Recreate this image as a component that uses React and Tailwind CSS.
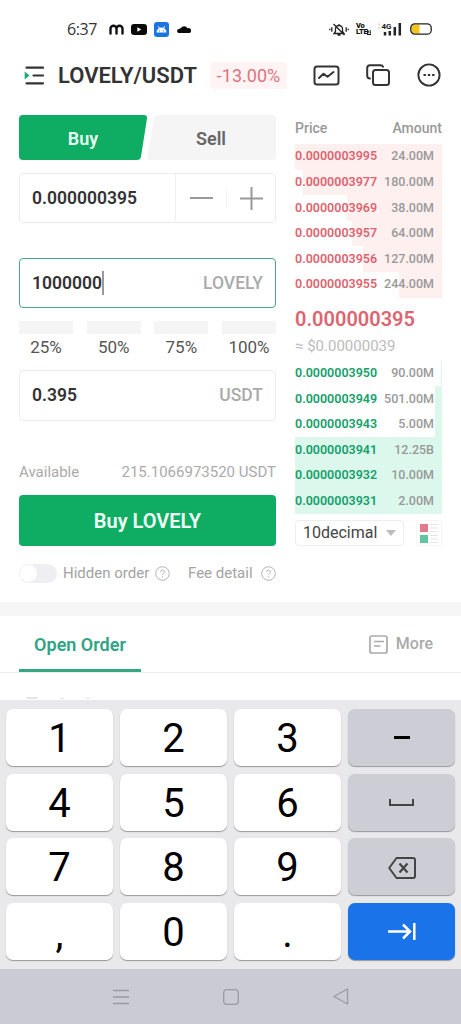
import { useState } from "react";

const asks = [
    { price: "0.0000003995", amount: "24.00M", depth: 147 },
    { price: "0.0000003977", amount: "180.00M", depth: 139 },
    { price: "0.0000003969", amount: "38.00M", depth: 95 },
    { price: "0.0000003957", amount: "64.00M", depth: 90 },
    { price: "0.0000003956", amount: "127.00M", depth: 79 },
    { price: "0.0000003955", amount: "244.00M", depth: 43 },
];

const bids = [
    { price: "0.0000003950", amount: "90.00M", depth: 1 },
    { price: "0.0000003949", amount: "501.00M", depth: 7 },
    { price: "0.0000003943", amount: "5.00M", depth: 7 },
    { price: "0.0000003941", amount: "12.25B", depth: 147 },
    { price: "0.0000003932", amount: "10.00M", depth: 147 },
    { price: "0.0000003931", amount: "2.00M", depth: 147 },
];

const StatusBar = () => (
    <div className="flex h-14 items-center justify-between pt-0.5 pr-[29px] pl-[67px]">
        <div className="flex items-center">
            <span className="w-[42px] font-['Open_Sans'] text-[16px] tracking-[-0.4px] text-[#333]">6:37</span>
            <svg className="h-[11px] w-[15px]" viewBox="0 0 15 11" fill="none" stroke="#111" strokeWidth="2.4" strokeLinecap="round">
                <path d="M1.5 9.5V4.7a3 3 0 0 1 6 0v4.8M7.5 4.7a3 3 0 0 1 6 0v4.8" />
            </svg>
            <svg className="ml-[7px] h-[11px] w-4" viewBox="0 0 16 11">
                <rect width="16" height="11" rx="3" fill="#0a0a0a" />
                <path d="M6.3 3.2v4.6l4-2.3z" fill="#fff" />
            </svg>
            <svg className="ml-[7px] size-[15px]" viewBox="0 0 15 15">
                <rect width="15" height="15" rx="3" fill="#1b75e0" />
                <path d="M2.5 10.5a5 5 0 0 1 10 0z" fill="#fff" />
                <path d="M4.2 4.2l1.3 2M10.8 4.2l-1.3 2" stroke="#fff" />
                <circle cx="5.5" cy="8.8" r=".6" fill="#1b75e0" />
                <circle cx="9.5" cy="8.8" r=".6" fill="#1b75e0" />
            </svg>
            <svg className="ml-2 h-2 w-[14px]" viewBox="0 0 14 8">
                <path d="M2 8a2 2 0 0 1 0-4 2 2 0 0 1 1.7-.8A4 4 0 0 1 10.600 3.200 2.500 2.500 0 0 1 12.500 8z" fill="#0a0a0a" />
            </svg>
        </div>
        <div className="flex items-center">
            <svg className="h-[13px] w-5" viewBox="0 0 20 13" fill="none" stroke="#222" strokeWidth="1.3">
                <path d="M5 10.500h10l-1.500-2V6a3.500 3.500 0 0 0-7 0v2.500zM10 1v1.500M8.500 12h3M4.500 1l11 11M2.800 4.300v4.400M17.200 4.300v4.400M.8 5.700v1.600M19.200 5.700v1.600" />
            </svg>
            <div className="ml-[7px] flex w-4 flex-col font-[Roboto] text-[7.5px] leading-[6.5px] font-black tracking-[-0.3px] text-[#111]">
                <span>Vo</span>
                <span className="flex items-center">
                    LTE
                    <span className="bg-[#111] px-[0.5px] text-[5px] leading-[5.500px] text-white">2</span>
                </span>
            </div>
            <svg className="ml-[6px] h-[14px] w-6" viewBox="0 0 24 14">
                <path d="M1 1.500v1.500M1 5v1.500" stroke="#aaa" />
                <text x="3.500" y="7" fontFamily="Roboto" fontSize="8" fontWeight="700" fill="#222">4G</text>
                <path d="M7 10v3.500M11.800 9v4.500M16.800 5v8.500M21.800 1v12.500" stroke="#222" strokeWidth="2.500" />
            </svg>
            <svg className="ml-[8px] h-3 w-[22px]" viewBox="0 0 22 12">
                <path d="M5 1.500H9.500v9H5A3.500 3.500 0 0 1 1.500 7V5A3.500 3.500 0 0 1 5 1.500z" fill="#f5c518" />
                <rect x=".8" y=".8" width="20.400" height="10.400" rx="4" fill="none" stroke="#222" strokeWidth="1.300" />
            </svg>
        </div>
    </div>
);

const Header = () => (
    <header className="flex h-[38px] items-center pl-6 text-[#333]">
        <svg className="h-[19px] w-5" viewBox="0 0 20 19" fill="none" stroke="#333" strokeWidth="2.200" strokeLinecap="round">
            <path d="M2.500 1.700H19M9.500 9.500H19M2.500 17.300H19" />
            <path d="M.7 5.500v8L5.500 9.500z" fill="#1fa876" stroke="none" />
        </svg>
        <h1 className="ml-[14px] w-[152px] text-[22px] font-semibold">LOVELY/USDT</h1>
        <span className="flex h-[27px] w-[77px] items-center justify-center rounded-sm bg-[#fff3f3] text-[18px] text-[#dc7480]">-13.00%</span>
        <div className="ml-[26px] flex items-center gap-[26px]">
            <svg className="h-[21px] w-[27px]" viewBox="0 0 27 21" fill="none" stroke="#333" strokeWidth="2" strokeLinecap="round" strokeLinejoin="round">
                <rect x="1.500" y="1.500" width="24" height="18" rx="2.500" />
                <path d="M6 13l4.500-4.300 4 3L20.500 7" />
            </svg>
            <svg className="h-[22px] w-6" viewBox="0 0 24 22" fill="none" stroke="#333" strokeWidth="2" strokeLinecap="round">
                <rect x="7" y="6" width="16" height="15" rx="2.500" />
                <path d="M4 14.500c-2 0-2.800-.8-2.800-2.700V4c0-2 .8-2.800 2.800-2.800h10.500c1.500 0 2.200.4 2.500 1.600" />
            </svg>
            <svg className="ml-px size-6" viewBox="0 0 24 24" fill="none" stroke="#333" strokeWidth="1.900">
                <circle cx="12" cy="12" r="10.600" />
                <path d="M6.500 12h2.400M10.800 12h2.400M15.100 12h2.400" strokeWidth="2.200" />
            </svg>
        </div>
    </header>
);

const QuestionIcon = ({ className }) => (
    <svg className={className} viewBox="0 0 15 15" fill="none" stroke="#b4b4b4">
        <circle cx="7.500" cy="7.500" r="6.800" />
        <path d="M5.600 6a1.900 1.900 0 1 1 2.600 1.700c-.5.200-.7.500-.7 1.200M7.500 10.200v1.200" />
    </svg>
);

const BookRow = ({ row, side }) => (
    <div className="relative h-[25.6px]">
        <div
            className={`absolute top-0 right-0 h-full ${side === "ask" ? "bg-[#fff0f0]" : "bg-[#dcf8ed]"}`}
            style={{ width: row.depth }}
        />
        <div className="relative flex h-full items-center justify-between pr-2 text-[12.500px] font-semibold">
            <span className={side === "ask" ? "text-[#dd6570]" : "text-[#17a06c]"}>{row.price}</span>
            <span className="font-medium text-[#999]">{row.amount}</span>
        </div>
    </div>
);

const OrderBook = () => (
    <section className="w-[147px] pt-1">
        <div className="flex h-[25px] justify-between text-[14px] leading-[18px] font-medium text-[#999]">
            <span>Price</span>
            <span>Amount</span>
        </div>
        {asks.map((row) => (
            <BookRow key={row.price} row={row} side="ask" />
        ))}
        <p className="mt-[7px] text-[20px] leading-[28px] font-semibold text-[#dd6570]">0.000000395</p>
        <p className="mt-[3px] h-[25px] text-[15px] leading-5 text-[#bbb]">≈ $0.00000039</p>
        {bids.map((row) => (
            <BookRow key={row.price} row={row} side="bid" />
        ))}
        <div className="mt-[6px] flex justify-between">
            <button className="flex h-[26px] w-[109px] items-center justify-between rounded-sm border border-[#eee] px-[7px] text-[16px] text-[#444]">
                10decimal
                <svg className="h-[6px] w-[10px]" viewBox="0 0 10 6">
                    <path d="M0 0h10L5 6z" fill="#bbb" />
                </svg>
            </button>
            <svg className="size-[26px]" viewBox="0 0 26 26">
                <rect x=".5" y=".5" width="25" height="25" rx="2" fill="#fff" stroke="#f5f5f5" />
                <rect x="4" y="4" width="8" height="8" fill="#e37a88" />
                <rect x="4" y="15" width="8" height="8" fill="#5fc4a0" />
                <path d="M14 4.500h8M14 8h8M14 11.500h8M14 15.500h8M14 19h8M14 22.500h8" stroke="#e6e6e6" />
            </svg>
        </div>
    </section>
);

const OrderForm = () => {
    const [hidden, setHidden] = useState(false);

    return (
        <section className="w-[257px]">
            <div className="relative flex h-[45px] text-[18px] font-semibold">
                <svg className="absolute inset-0 h-full w-full" viewBox="0 0 257 45">
                    <path d="M4 0h121q3.500 0 3 3.500l-6 38q-.5 3.500-4 3.500H4q-4 0-4-4V4q0-4 4-4z" fill="#0fad63" />
                    <path d="M139 0h114q4 0 4 4v37q0 4-4 4H132q-4 0-3.300-4l6-37q.5-4 4.300-4z" fill="#f5f5f5" />
                </svg>
                <button className="relative w-32 pt-0.5 text-[#e8fff3]">Buy</button>
                <button className="relative w-32 pt-0.5 text-[#666]">Sell</button>
            </div>

            <div className="mt-[13px] flex h-[50px] items-center rounded-sm border border-[#ececec]">
                <span className="w-[155px] pl-3 text-[17.500px] font-semibold text-[#333]">0.000000395</span>
                <div className="flex h-full w-[51px] items-center justify-center border-l border-[#f0f0f0]">
                    <div className="h-[2px] w-[23px] bg-[#999]" />
                </div>
                <div className="flex h-5 flex-1 items-center justify-center border-l border-[#f5f5f5]">
                    <svg className="size-[23px]" viewBox="0 0 23 23" stroke="#999" strokeWidth="2">
                        <path d="M0 11.500h23M11.500 0v23" />
                    </svg>
                </div>
            </div>

            <div className="mt-[35px] flex h-[50px] items-center justify-between rounded-[4px] border-[1.500px] border-[#4ba887] px-3 text-[17.500px] font-semibold">
                <span className="flex items-center text-[#333]">
                    1000000
                    <span className="h-6 w-[2px] bg-[#999]" />
                </span>
                <span className="font-medium text-[#aaa]">LOVELY</span>
            </div>

            <div className="mt-[13px] flex justify-between">
                {["25%", "50%", "75%", "100%"].map((label) => (
                    <div key={label} className="w-[54px] text-center text-[17px] text-[#555]">
                        <div className="h-[13px] bg-[#f5f5f5]" />
                        <span className="block h-9 leading-[27px]">{label}</span>
                    </div>
                ))}
            </div>

            <div className="flex h-[51px] items-center justify-between rounded-sm border border-[#ececec] px-3 text-[17.500px] font-semibold">
                <span className="text-[#333]">0.395</span>
                <span className="font-medium text-[#aaa]">USDT</span>
            </div>

            <div className="mt-[41px] flex h-5 items-center justify-between text-[15px] text-[#aaa]">
                <span>Available</span>
                <span>215.1066973520 USDT</span>
            </div>
            <button className="mt-[13px] h-[51px] w-full rounded-[4px] bg-[#0fad63] text-[20px] font-semibold text-[#effff6]">Buy LOVELY</button>

            <div className="mt-[17px] flex h-5 items-center text-[15px] text-[#a3a3a3]">
                <button
                    onClick={() => setHidden(!hidden)}
                    className={`flex h-[19px] w-[38px] items-center rounded-full bg-[#efeff3] p-px ${hidden ? "justify-end" : "justify-start"}`}
                >
                    <span className="size-[17px] rounded-full bg-white" />
                </button>
                <span className="ml-[6px] w-[92px] whitespace-nowrap">Hidden order</span>
                <QuestionIcon className="size-[15px]" />
                <span className="ml-[18px]">Fee detail</span>
                <QuestionIcon className="ml-auto size-[15px]" />
            </div>
        </section>
    );
};

const OpenOrders = () => (
    <section className="h-[98px] overflow-hidden border-t-[14px] border-[#f6f6f6]">
        <div className="flex h-[57px] justify-between border-b border-[#eee] pr-7 pl-[19px]">
            <div className="flex w-[122px] items-center justify-center border-b-[3px] border-[#35a583] pt-1 text-[18px] font-semibold text-[#2fa585]">Open Order</div>
            <div className="flex items-center gap-[8px] text-[16px] font-medium text-[#aaa]">
                <svg className="size-[19px]" viewBox="0 0 19 19" fill="none" stroke="#aaa" strokeWidth="1.700">
                    <rect x="1" y="1" width="17" height="17" rx="2" />
                    <path d="M5 6.500h10M5 11h6.500" />
                </svg>
                More
            </div>
        </div>
        <div className="flex h-[26px] items-end gap-[22px] pl-[26px]">
            <div className="h-0.5 w-3 rounded-t-sm bg-[#e3e3e3]" />
            <div className="h-px w-1 bg-[#e3e3e3]" />
            <div className="h-px w-1 bg-[#e3e3e3]" />
        </div>
    </section>
);

const keyBase = "flex h-[57px] items-center justify-center rounded-[7px] shadow-[0_1px_1px_rgba(0,0,0,0.35)]";

const Key = ({ label }) => (
    <button className={`${keyBase} bg-white text-[40px] leading-none text-black`}>
        <span className={label === "," || label === "." ? "pt-1" : "pt-[3px]"}>{label}</span>
    </button>
);

const Keyboard = () => (
    <section className="grid h-[269px] grid-cols-4 content-start gap-x-[7px] gap-y-[7.700px] bg-[#e9e9ec] px-[6px] pt-[9px]">
        <Key label="1" />
        <Key label="2" />
        <Key label="3" />
        <button className={`${keyBase} bg-[#cdced5]`}>
            <span className="h-[3px] w-4 bg-black" />
        </button>
        <Key label="4" />
        <Key label="5" />
        <Key label="6" />
        <button className={`${keyBase} bg-[#cdced5]`}>
            <svg className="h-[7px] w-[25px]" viewBox="0 0 25 7" fill="none" stroke="#444" strokeWidth="2">
                <path d="M1 0v6h23V0" />
            </svg>
        </button>
        <Key label="7" />
        <Key label="8" />
        <Key label="9" />
        <button className={`${keyBase} bg-[#cdced5]`}>
            <svg className="mt-[3px] h-[22px] w-7" viewBox="0 0 28 22" fill="none" stroke="#444" strokeWidth="2" strokeLinejoin="round">
                <path d="M8.500 1H25q2 0 2 2v16q0 2-2 2H8.500L1.200 11z" />
                <path d="M11.500 6.500l8 9M19.500 6.500l-8 9" strokeWidth="2.200" />
            </svg>
        </button>
        <Key label="," />
        <Key label="0" />
        <Key label="." />
        <button className={`${keyBase} bg-[#1a73e8]`}>
            <svg className="h-[17px] w-7" viewBox="0 0 28 17" fill="none" stroke="#fff" strokeWidth="2.500">
                <path d="M0 8.500h22M15 1.500l7 7-7 7M26.300 0v17" />
            </svg>
        </button>
    </section>
);

const NavBar = () => (
    <nav className="flex h-[55px] items-center justify-center gap-[94px] bg-[#cbccd3]">
        <svg className="h-4 w-4" viewBox="0 0 16 16" stroke="#9a9ba1" strokeWidth="1.300">
            <path d="M0 1.500h16M0 8h16M0 14.500h16" />
        </svg>
        <svg className="h-4 w-4" viewBox="0 0 16 16" fill="none" stroke="#9a9ba1" strokeWidth="1.300">
            <rect x=".7" y=".7" width="14.600" height="14.600" rx="3" />
        </svg>
        <svg className="h-[17px] w-4" viewBox="0 0 16 17" fill="none" stroke="#9a9ba1" strokeWidth="1.300" strokeLinejoin="round">
            <path d="M14.500 1v15L1 8.500z" />
        </svg>
    </nav>
);

const App = () => (
    <div className="h-[1024px] w-[461px] overflow-hidden bg-white font-[Roboto,sans-serif]">
        <StatusBar />
        <Header />
        <main className="flex h-[508px] justify-between pt-[21px] pr-[19px] pl-[19px]">
            <OrderForm />
            <OrderBook />
        </main>
        <OpenOrders />
        <Keyboard />
        <NavBar />
    </div>
);

export default App;
